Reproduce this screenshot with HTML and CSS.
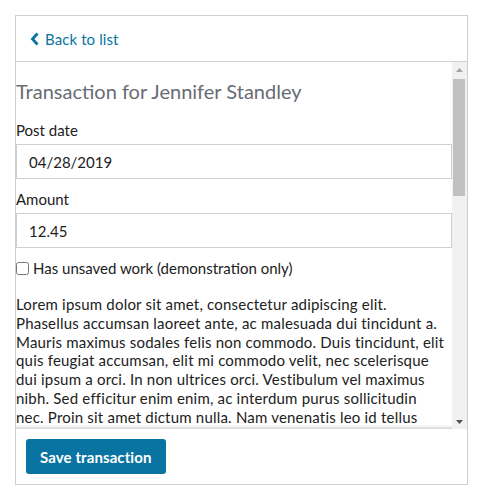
FILE: index.html
```html
<!DOCTYPE html>
<html>
<head>
<meta charset="utf-8">
<link rel="stylesheet" href="styles.css">
</head>
<body>
<div class="panel">
  <div class="header">
    <a class="back" href="#">
      <svg class="chev" width="9" height="14" viewBox="0 0 9 14"><path d="M7.5 1.5 L2.5 7 L7.5 12.5" fill="none" stroke="currentColor" stroke-width="2.8" stroke-linejoin="miter"/></svg>
      <span>Back to list</span>
    </a>
  </div>
  <div class="body">
    <div class="content">
      <h2 class="title">Transaction for Jennifer Standley</h2>
      <label class="lbl">Post date</label>
      <input class="field" type="text" value="04/28/2019">
      <label class="lbl">Amount</label>
      <input class="field" type="text" value="12.45">
      <label class="check"><input type="checkbox"> <span>Has unsaved work (demonstration only)</span></label>
      <p class="para">Lorem ipsum dolor sit amet, consectetur adipiscing elit. Phasellus accumsan laoreet ante, ac malesuada dui tincidunt a. Mauris maximus sodales felis non commodo. Duis tincidunt, elit quis feugiat accumsan, elit mi commodo velit, nec scelerisque dui ipsum a orci. In non ultrices orci. Vestibulum vel maximus nibh. Sed efficitur enim enim, ac interdum purus sollicitudin<br>nec. Proin sit amet dictum nulla. Nam venenatis leo id tellus fringilla, vel faucibus sapien cursus. Aliquam erat volutpat. Integer posuere metus at neque luctus, vitae aliquet lacus tempor.</p>
    </div>
    <div class="scrollbar">
      <div class="sb-btn"><svg width="7" height="4" viewBox="0 0 7 4"><path d="M0 4 L3.5 0 L7 4 Z" fill="#a3a3a3"/></svg></div>
      <div class="sb-track"><div class="sb-thumb"></div></div>
      <div class="sb-btn"><svg width="7" height="4" viewBox="0 0 7 4"><path d="M0 0 L3.5 4 L7 0 Z" fill="#505050"/></svg></div>
    </div>
  </div>
  <div class="footer">
    <button class="save" type="button">Save transaction</button>
  </div>
</div>
</body>
</html>
```
FILE: styles.css
```css
html, body {
  margin: 0;
  padding: 0;
  background: #fff;
}
body {
  font-family: Lato, "Open Sans", sans-serif;
  font-size: 15px;
  color: #212121;
}
.panel {
  margin: 15px;
  width: 453px;
  height: 470px;
  box-sizing: border-box;
  border: 1px solid #cdcfd2;
  display: flex;
  flex-direction: column;
}
.header {
  height: 45px;
  flex: none;
  border-bottom: 1px solid #cdcfd2;
  display: flex;
  align-items: center;
  padding-left: 14px;
}
.back {
  color: #0974a1;
  text-decoration: none;
  display: flex;
  align-items: center;
  gap: 6px;
  font-size: 15px;
  letter-spacing: 0.1px;
}
.chev {
  display: block;
}
.body {
  flex: 1;
  min-height: 0;
  display: flex;
}
.content {
  flex: 1;
  min-width: 0;
  overflow: hidden;
  position: relative;
}
.content::after {
  content: "";
  position: absolute;
  left: 0;
  right: 0;
  bottom: 0;
  height: 4px;
  background: linear-gradient(to bottom, rgba(0, 0, 0, 0), rgba(0, 0, 0, 0.16));
}
.scrollbar {
  flex: none;
  width: 15px;
  background: #f1f1f1;
  display: flex;
  flex-direction: column;
}
.sb-btn {
  height: 15px;
  flex: none;
  display: flex;
  align-items: center;
  justify-content: center;
}
.sb-btn svg {
  display: block;
}
.sb-track {
  flex: 1;
  padding: 2px 2px 0 1px;
}
.sb-thumb {
  height: 117px;
  background: #c1c1c1;
}
.title {
  font-size: 20px;
  font-weight: 400;
  color: #686c73;
  margin: 17px 0 17px;
  line-height: 24px;
}
.lbl {
  display: block;
  line-height: 20px;
  margin-bottom: 4px;
}
.field {
  display: block;
  box-sizing: border-box;
  width: 100%;
  height: 35px;
  border: 1px solid #cdcfd2;
  padding: 0 12px;
  font: inherit;
  color: #212121;
  margin: 0 0 10px;
  outline: none;
}
.check {
  display: flex;
  align-items: center;
  gap: 4px;
  line-height: 20px;
  margin-top: 9px;
}
.check input {
  margin: 0;
  width: 13px;
  height: 13px;
}
.para {
  margin: 17px 0 0;
  line-height: 18.8px;
  letter-spacing: 0.2px;
}
.footer {
  flex: none;
  height: 55px;
  box-sizing: border-box;
  padding: 10px;
}
.save {
  height: 35px;
  padding: 0 14px;
  border: none;
  border-radius: 3px;
  background: #0974a1;
  color: #fff;
  font-family: inherit;
  font-size: 15px;
  font-weight: 700;
  letter-spacing: 0.1px;
}
```
